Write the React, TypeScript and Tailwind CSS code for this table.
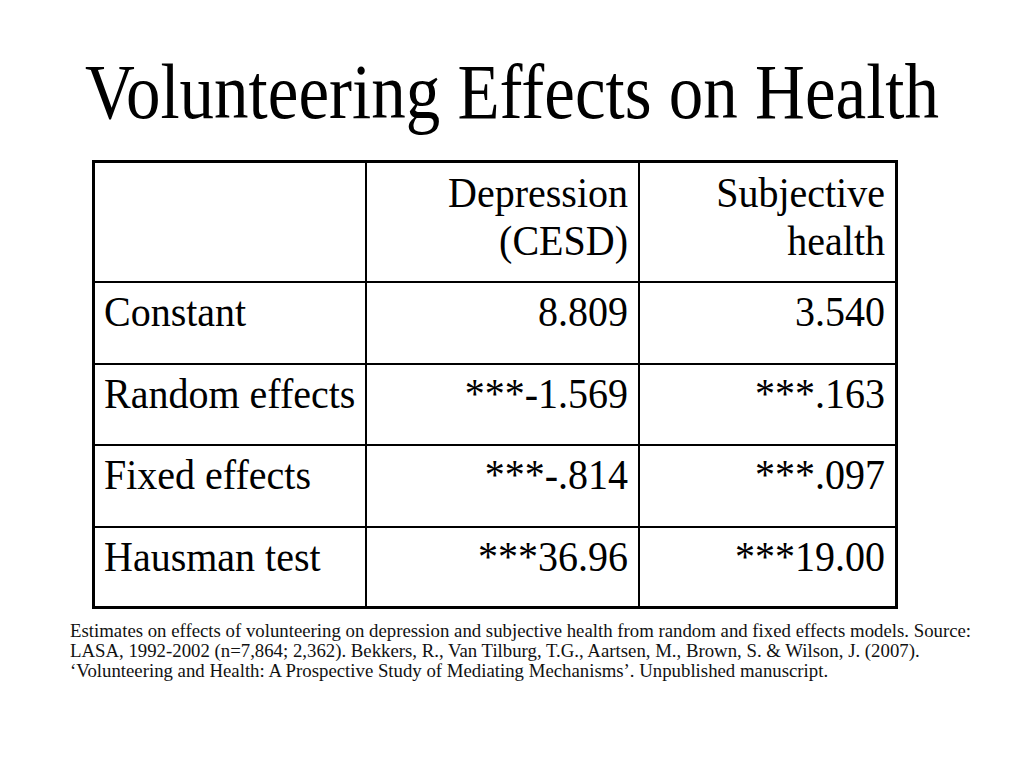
import React from "react";

const rows = [
  { cells: ["Constant", "8.809", "3.540"], h: "h-[82px]", b: true },
  { cells: ["Random effects", "***-1.569", "***.163"], h: "h-[81px]", b: true },
  { cells: ["Fixed effects", "***-.814", "***.097"], h: "h-[82px]", b: true },
  { cells: ["Hausman test", "***36.96", "***19.00"], h: "h-[78px]", b: false },
];

export default function App() {
  return (
    <div
      className="w-[1024px] h-[768px] bg-white text-black relative overflow-hidden"
      style={{ fontFamily: '"Liberation Serif", "Times New Roman", serif' }}
    >
      <div className="pt-[47px] h-[160px] flex justify-center">
        <h1 className="text-[69px] leading-[80px] scale-y-[1.12] origin-top whitespace-nowrap">
          Volunteering Effects on Health
        </h1>
      </div>
      <div className="ml-[92px] w-[806px] border-[3px] border-black">
        <div className="grid grid-cols-[272px_273px_1fr] h-[120px] border-b-2 border-black">
          <div className="border-r-2 border-black" />
          <div className="border-r-2 border-black pr-[10px] pt-[5px] text-right text-[40px] leading-[48px]">
            <div className="scale-y-105 origin-top">Depression</div>
            <div className="scale-y-105 origin-top">(CESD)</div>
          </div>
          <div className="pr-[10px] pt-[5px] text-right text-[40px] leading-[48px]">
            <div className="scale-y-105 origin-top">Subjective</div>
            <div className="scale-y-105 origin-top">health</div>
          </div>
        </div>
        {rows.map((r) => (
          <div
            key={r.cells[0]}
            className={`grid grid-cols-[272px_273px_1fr] ${r.h} ${
              r.b ? "border-b-2 border-black" : ""
            } text-[40px] leading-[48px]`}
          >
            <div className="border-r-2 border-black pl-[9px] pt-[4px] whitespace-nowrap">
              <div className="scale-y-105 origin-top">{r.cells[0]}</div>
            </div>
            <div className="border-r-2 border-black pr-[10px] pt-[4px] text-right">
              <div className="scale-y-105 origin-top">{r.cells[1]}</div>
            </div>
            <div className="pr-[10px] pt-[4px] text-right">
              <div className="scale-y-105 origin-top">{r.cells[2]}</div>
            </div>
          </div>
        ))}
      </div>
      <div className="ml-[70px] mt-[12px] w-[940px] text-[18.8px] leading-[20px] text-[#111]">
        <div className="whitespace-nowrap">
          Estimates on effects of volunteering on depression and subjective health from random and fixed effects models. Source:
        </div>
        <div className="whitespace-nowrap">
          LASA, 1992-2002 (n=7,864; 2,362). Bekkers, R., Van Tilburg, T.G., Aartsen, M., Brown, S. &amp; Wilson, J. (2007).
        </div>
        <div className="whitespace-nowrap">
          ‘Volunteering and Health: A Prospective Study of Mediating Mechanisms’. Unpublished manuscript.
        </div>
      </div>
    </div>
  );
}
